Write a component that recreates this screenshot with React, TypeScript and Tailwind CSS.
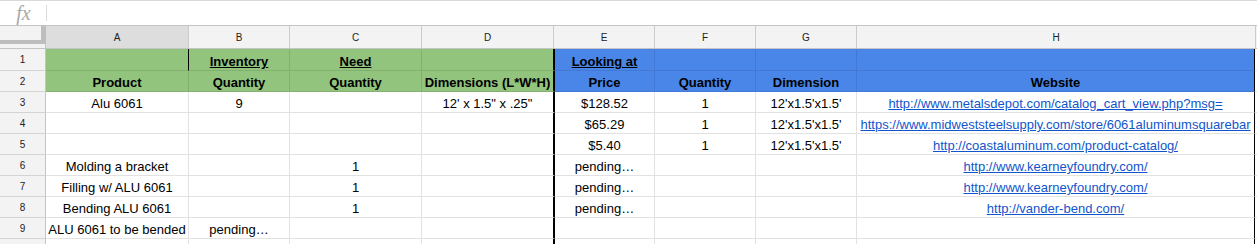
import React from "react";

type Cell = string | { link: string };

const BODY_W = [
  "w-[143px]",
  "w-[101px]",
  "w-[132px]",
  "w-[133px]",
  "w-[100px]",
  "w-[101px]",
  "w-[101px]",
  "w-[398px]",
];
const HEAD_W = [
  "w-[143px]",
  "w-[101px]",
  "w-[132px]",
  "w-[132px]",
  "w-[101px]",
  "w-[101px]",
  "w-[101px]",
  "w-[399px]",
];
const LETTERS = ["A", "B", "C", "D", "E", "F", "G", "H"];

const ROWS: Cell[][] = [
  ["", "Inventory", "Need", "", "Looking at", "", "", ""],
  ["Product", "Quantity", "Quantity", "Dimensions (L*W*H)", "Price", "Quantity", "Dimension", "Website"],
  [
    "Alu 6061",
    "9",
    "",
    "12' x 1.5\" x .25\"",
    "$128.52",
    "1",
    "12'x1.5'x1.5'",
    { link: "http://www.metalsdepot.com/catalog_cart_view.php?msg=" },
  ],
  [
    "",
    "",
    "",
    "",
    "$65.29",
    "1",
    "12'x1.5'x1.5'",
    { link: "https://www.midweststeelsupply.com/store/6061aluminumsquarebar" },
  ],
  ["", "", "", "", "$5.40", "1", "12'x1.5'x1.5'", { link: "http://coastaluminum.com/product-catalog/" }],
  ["Molding a bracket", "", "1", "", "pending…", "", "", { link: "http://www.kearneyfoundry.com/" }],
  ["Filling w/ ALU 6061", "", "1", "", "pending…", "", "", { link: "http://www.kearneyfoundry.com/" }],
  ["Bending ALU 6061", "", "1", "", "pending…", "", "", { link: "http://vander-bend.com/" }],
  ["ALU 6061 to be bended", "pending…", "", "", "", "", "", ""],
  ["", "", "", "", "", "", "", ""],
];

function BodyCell({ value, row, col }: { value: Cell; row: number; col: number }) {
  const header = row < 2;
  const green = header && col < 4;
  const blue = header && col >= 4;
  const bg = green ? "bg-[#93c47d]" : blue ? "bg-[#4a86e8]" : "bg-white";
  const bb = green ? "border-b-[#84b06f]" : blue ? "border-b-[#4379d4]" : "border-b-[#e2e2e2]";
  let br = green ? "border-r border-r-[#84b06f]" : blue ? "border-r border-r-[#4379d4]" : "border-r border-r-[#e2e2e2]";
  if (col === 3) br = "border-r-2 border-r-black";
  if (col === 7) br = "border-r border-r-black";
  if (col === 0 && row === 0) br = "border-r border-r-black";
  const weight = header ? "font-bold" : "font-normal";
  const underline = row === 0 ? "underline" : "";
  return (
    <div
      className={`${BODY_W[col]} ${bg} ${br} border-b ${bb} shrink-0 flex items-end justify-center overflow-hidden whitespace-nowrap`}
    >
      {typeof value === "string" ? (
        <span className={`leading-[17px] text-[13px] text-black ${weight} ${underline}`}>{value}</span>
      ) : (
        <span className="leading-[17px] text-[13px] text-[#1155cc] underline">{value.link}</span>
      )}
    </div>
  );
}

export default function App() {
  return (
    <div
      className="w-[1257px] h-[244px] overflow-hidden bg-white flex flex-col"
      style={{ fontFamily: '"Liberation Sans", Arial, sans-serif' }}
    >
      {/* formula bar */}
      <div className="h-[26px] shrink-0 border-t border-t-[#dadada] border-b border-b-[#c4c4c4] flex items-center">
        <div
          className="w-[46px] pl-[1px] flex items-center justify-center text-[20px] italic text-[#a8a8a8] leading-none"
          style={{ fontFamily: '"Liberation Serif", "Times New Roman", serif' }}
        >
          fx
        </div>
        <div className="w-px h-[16px] bg-[#dadada]" />
        <div className="flex-1" />
      </div>

      {/* column headers */}
      <div className="h-[23px] shrink-0 flex">
        <div className="w-[46px] h-[23px] shrink-0 flex flex-col bg-[#f3f3f3] border-b border-b-[#c4c4c4]">
          <div className="h-[14px] flex">
            <div className="flex-1" />
            <div className="w-[5px] bg-[#bdbdbd]" />
          </div>
          <div className="h-[4px] bg-[#bdbdbd]" />
          <div className="h-[4px] flex">
            <div className="flex-1" />
            <div className="w-px bg-[#c4c4c4]" />
          </div>
        </div>
        {LETTERS.map((l, i) => (
          <div
            key={l}
            className={`${HEAD_W[i]} shrink-0 ${i === 0 ? "bg-[#dddddd]" : "bg-[#f3f3f3]"} border-r border-r-[#cccccc] border-b border-b-[#c4c4c4] flex items-center justify-center text-[10px] text-[#222222]`}
          >
            {l}
          </div>
        ))}
        <div className="flex-1 bg-[#f3f3f3] border-b border-b-[#c4c4c4]" />
      </div>

      {/* body rows */}
      {ROWS.map((r, ri) => (
        <div key={ri} className={`${ri === 0 ? "h-[22px]" : "h-[21px]"} shrink-0 flex`}>
          <div className="w-[46px] shrink-0 bg-[#f3f3f3] border-r border-r-[#c4c4c4] border-b border-b-[#d4d4d4] flex items-center justify-center text-[10px] text-[#222222]">
            {ri < 9 ? ri + 1 : ""}
          </div>
          {r.map((v, ci) => (
            <BodyCell key={ci} value={v} row={ri} col={ci} />
          ))}
          <div className="flex-1 border-b border-b-[#e2e2e2]" />
        </div>
      ))}
    </div>
  );
}
